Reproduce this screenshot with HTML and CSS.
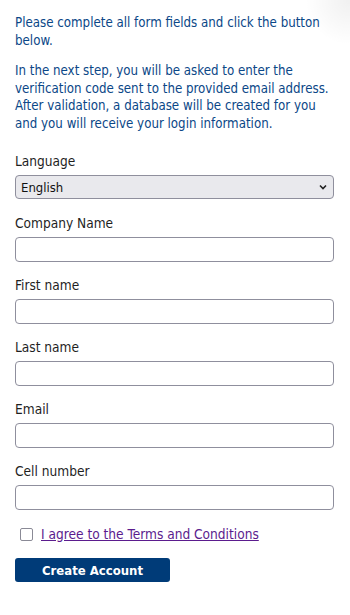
FILE: index.html
```html
<!DOCTYPE html>
<html lang="en">
<head>
<meta charset="utf-8">
<title>Create Account</title>
<link rel="stylesheet" href="styles.css">
</head>
<body>
<div class="page">
  <p class="intro">Please complete all form fields and click the button below.</p>
  <p class="intro">In the next step, you will be asked to enter the verification code sent to the provided email address. After validation, a database will be created for you and you will receive your login information.</p>
  <form class="form">
    <div class="field">
      <label class="label" for="lang">Language</label>
      <select class="select" id="lang"><option>English</option></select>
    </div>
    <div class="field">
      <label class="label" for="company">Company Name</label>
      <input class="input" id="company" type="text">
    </div>
    <div class="field">
      <label class="label" for="first">First name</label>
      <input class="input" id="first" type="text">
    </div>
    <div class="field">
      <label class="label" for="last">Last name</label>
      <input class="input" id="last" type="text">
    </div>
    <div class="field">
      <label class="label" for="email">Email</label>
      <input class="input" id="email" type="text">
    </div>
    <div class="field">
      <label class="label" for="cell">Cell number</label>
      <input class="input" id="cell" type="text">
    </div>
    <div class="agree">
      <span class="checkbox"></span>
      <a class="terms" href="#terms">I agree to the Terms and Conditions</a>
    </div>
    <button class="submit" type="button">Create Account</button>
  </form>
</div>
</body>
</html>
```

FILE: styles.css
```css
html, body {
  margin: 0;
  padding: 0;
  background: #ffffff;
}
body {
  font-family: "DejaVu Sans Condensed", "DejaVu Sans", sans-serif;
  font-size: 13.6px;
  color: #1f1f1f;
}
.page {
  padding: 14px 16px 20px 15px;
  background: radial-gradient(circle at 100% 0, rgba(0,0,0,0.06) 0, rgba(0,0,0,0) 45px) no-repeat;
}
.intro {
  max-width: 320px;
  margin: 0 0 13px 0;
  color: #0b4787;
  font-size: 13.2px;
  line-height: 17.5px;
}
.form {
  display: flex;
  flex-direction: column;
  margin-top: 20px;
}
.field {
  display: flex;
  flex-direction: column;
  margin-bottom: 14px;
}
.label {
  line-height: 18px;
  margin-bottom: 5px;
  color: #1f1f1f;
}
.select {
  -webkit-appearance: none;
  appearance: none;
  box-sizing: border-box;
  height: 24px;
  margin-bottom: 1px;
  width: 100%;
  font: inherit;
  font-size: 13px;
  color: #111;
  background-color: #e9e9ed;
  background-image: url("data:image/svg+xml;utf8,<svg xmlns='http://www.w3.org/2000/svg' width='8' height='6' viewBox='0 0 8 6'><path d='M1 1.5 L4 4.5 L7 1.5' fill='none' stroke='%23222' stroke-width='1.6'/></svg>");
  background-repeat: no-repeat;
  background-position: right 6px center;
  background-size: 8px 6px;
  border: 1px solid #8f8f9d;
  border-radius: 4px;
  padding: 0 20px 0 5px;
}
.input {
  box-sizing: border-box;
  height: 25px;
  width: 100%;
  font: inherit;
  border: 1px solid #8f8f9d;
  border-radius: 4px;
  background: #fff;
  padding: 0 4px;
}
.agree {
  display: flex;
  align-items: center;
  gap: 8px;
  padding-left: 5px;
  margin-top: 2px;
}
.checkbox {
  width: 11px;
  height: 11px;
  border: 1px solid #8a8a96;
  border-radius: 2px;
  background: #fff;
}
.terms {
  color: #5b1c8e;
  text-decoration: underline;
}
.submit {
  align-self: flex-start;
  margin-top: 16px;
  width: 155px;
  height: 24px;
  font-family: inherit;
  font-size: 13px;
  font-weight: bold;
  color: #ffffff;
  background: #003b78;
  border: none;
  border-radius: 3px;
}
```
